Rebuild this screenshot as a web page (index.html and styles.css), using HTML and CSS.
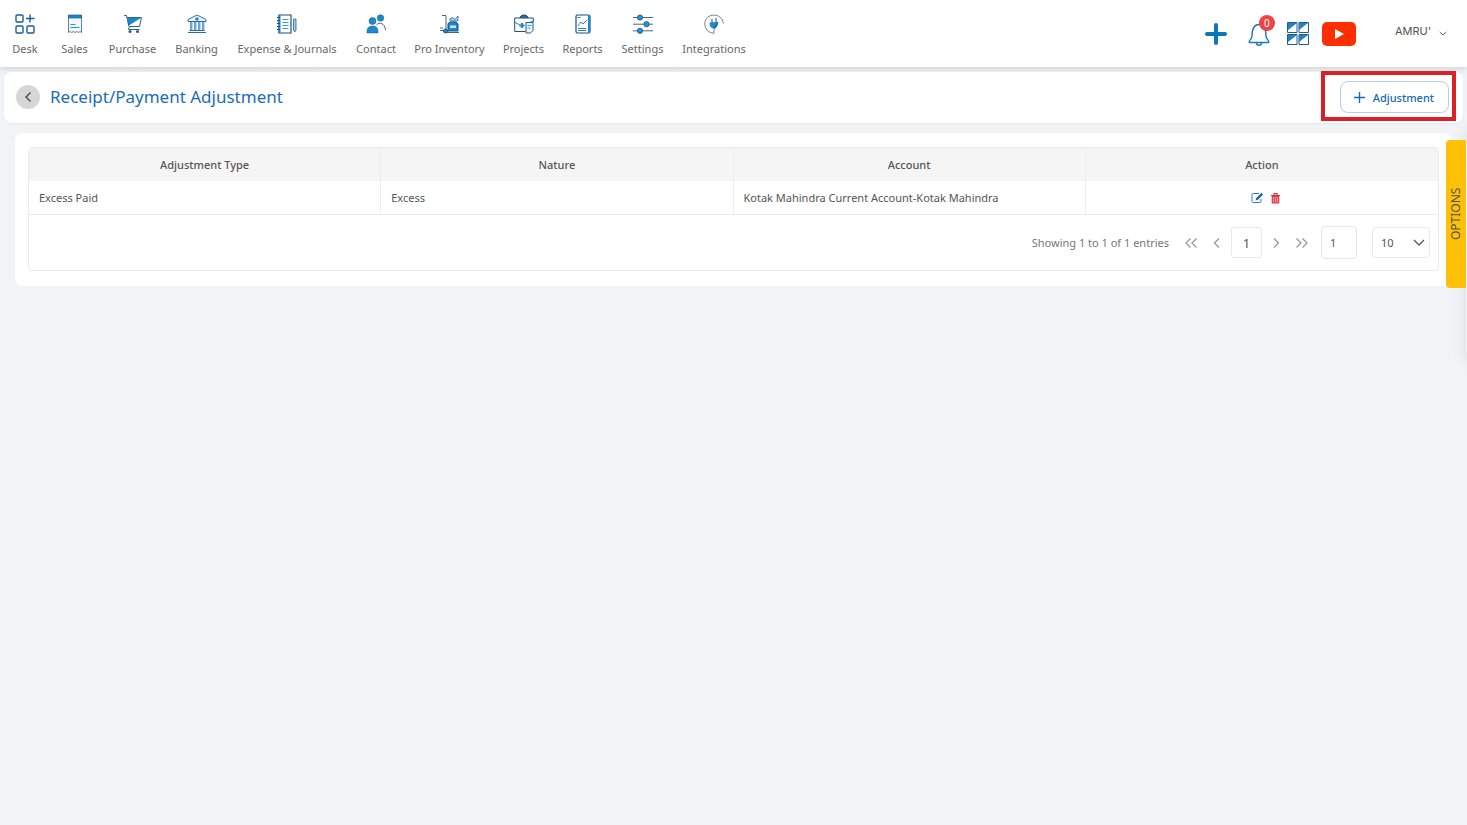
FILE: index.html
```html
<!DOCTYPE html>
<html lang="en">
<head>
<meta charset="utf-8">
<title>Receipt/Payment Adjustment</title>
<link rel="stylesheet" href="styles.css">
</head>
<body>
<header class="topbar">
  <nav class="menu">
    <a class="menu-item" href="#"><svg class="menu-icon" viewBox="0 0 20 20"><g fill="none" stroke="#1b5c9e" stroke-width="1.4"><rect x="1" y="1" width="7" height="7" rx="1"/><rect x="1" y="12" width="7" height="7" rx="1"/><rect x="12" y="12" width="7" height="7" rx="1"/><path d="M15 0.500v8M11 4.500h8.500"/></g></svg>Desk</a>
    <a class="menu-item" href="#"><svg class="menu-icon" viewBox="0 0 20 20"><path d="M3.500 1.500h13v17l-1.500-1-1.600 1-1.700-1-1.700 1-1.700-1-1.700 1-1.600-1-1.500 1z" fill="#f3f9fe" stroke="#5681ad"/><path d="M3.500 1h13v3h-13z" fill="#1e88c9" stroke="#1b5c9e" stroke-width=".7"/><path d="M5.500 10.500h5M5.500 13.500h9" stroke="#2e93d1"/></svg>Sales</a>
    <a class="menu-item" href="#"><svg class="menu-icon" viewBox="0 0 20 20"><path d="M4.500 4h13.500l-13 8z" fill="#1e88c9"/><path d="M1 1.500h2.500l2.500 11M4 3.500h14.500l-2 9h-10l-1 3h11" fill="none" stroke="#33618f"/><circle cx="7" cy="17.500" r="1.500" fill="#1b5c9e"/><circle cx="14.500" cy="17.500" r="1.500" fill="#1b5c9e"/></svg>Purchase</a>
    <a class="menu-item" href="#"><svg class="menu-icon" viewBox="0 0 20 20"><path d="M1 7.500v-2L10 1l9 4.500v2z" fill="#eef7fd" stroke="#286da8"/><circle cx="10" cy="5" r="1.800" fill="#1e88c9"/><path d="M4 8v8M8 8v8M12 8v8M16 8v8" stroke="#1b5c9e" stroke-width="1.200"/><path d="M5 8v8M9 8v8M13 8v8M17 8v8" stroke="#6cb4df"/><path d="M2.500 16.500h15M1 18.500h18" stroke="#286da8"/></svg>Banking</a>
    <a class="menu-item" href="#"><svg class="menu-icon" viewBox="0 0 20 20"><path d="M2 1h12v18H2z" fill="#fff" stroke="#1b4f86" stroke-width="1.200"/><path d="M2.500 1v18" stroke="#1e88c9" stroke-width="2"/><path d="M0 3.500h3M0 6.500h3M0 9.500h3M0 12.500h3M0 15.500h3" stroke="#1b4f86"/><path d="M5.500 5.500h6M5.500 8.500h6M5.500 11.500h6M5.500 14.500h6" stroke="#3a9bd4"/><path d="M16.500 5h2.500v11l-1.200 2-1.300-2z" fill="#9dcced" stroke="#2865a0" stroke-width=".8"/></svg>Expense &amp; Journals</a>
    <a class="menu-item" href="#"><svg class="menu-icon" viewBox="0 0 20 20"><g fill="#1e88c9" stroke="#1b5c9e" stroke-width=".5"><circle cx="6.500" cy="7" r="3.500"/><circle cx="14.500" cy="4" r="3.300"/><path d="M1 19v-2c0-3 2-5 5.500-5s5.500 2 5.500 5v2z"/></g><path d="M10.500 11c3-3.500 8.500-1.500 9 5" fill="none" stroke="#4b6381"/></svg>Contact</a>
    <a class="menu-item" href="#"><svg class="menu-icon" viewBox="0 0 20 20"><path d="M2 1.500h4v14M0 14h3M0 16.500h5M7 18.500h12" fill="none" stroke="#4a6486"/><path d="M8 9.500l2-1.500h6l2 2v7H8z" fill="#1e88c9" stroke="#1b4f86"/><path d="M10 11.500h6v2.500h-6z" fill="#cce8f7"/><circle cx="5.500" cy="17" r="2" fill="#2f83bd" stroke="#1b4f86"/><path d="M10 7V4.500l3-1 1.500 2L18 2v5z" fill="#a9cfe8" stroke="#28598b" stroke-width=".7"/></svg>Pro Inventory</a>
    <a class="menu-item" href="#"><svg class="menu-icon" viewBox="0 0 20 20"><path d="M6 4c0-4 8-4 8 0" fill="#286da8" stroke="#173e6c"/><path d="M.7 4h18.600v4M.7 4v13.500h11" fill="none" stroke="#284c77"/><path d="M1 8.500l5 2.500M12 10.500l7-3.500" stroke="#1e88c9"/><path d="M5.500 11.500h5M8 9v5" stroke="#1e88c9" stroke-width="2"/><path d="M12 8.500h7v8l-2.500 2.500H12z" fill="#eef8ff" stroke="#1b5c9e"/><path d="M13.500 11.500h4M13.500 14h3" stroke="#3a9bd4"/></svg>Projects</a>
    <a class="menu-item" href="#"><svg class="menu-icon" viewBox="0 0 20 20"><rect x="3" y="1" width="14" height="18" rx="1.500" fill="#fff" stroke="#1b4f86" stroke-width="1.200"/><path d="M15 1.500l2 1v16h-2z" fill="#1e88c9"/><path d="M5 12l3-4 2 2 4-4M4.500 3.500h3M5 14.500h8M5 16.500h8" fill="none" stroke="#2885c0"/></svg>Reports</a>
    <a class="menu-item" href="#"><svg class="menu-icon" viewBox="0 0 20 20"><path d="M0 3.500h20M0 10.200h20M0 16.800h20" stroke="#4a6486"/><g fill="#2794d1" stroke="#1b4f86" stroke-width=".8"><circle cx="7" cy="3.500" r="2.600"/><circle cx="13.500" cy="10.200" r="2.600"/><circle cx="7" cy="16.800" r="2.600"/></g></svg>Settings</a>
    <a class="menu-item" href="#"><svg class="menu-icon" viewBox="0 0 20 20"><path d="M19.300 9.500C18.500-1.500 1-2 .8 9.800c0 5 4 9.500 9.200 9.400v-4" fill="none" stroke="#687e9c"/><path d="M5.500 8.500L14 8c0 4-1 5.500-4 6.500-3 0-4.500-2-4.500-6z" fill="#1e88c9"/><path d="M8 5v4M12 4v5M14 8.500l-4 6.500" stroke="#1b4f86"/></svg>Integrations</a>
  </nav>
  <div class="tools">
    <button class="tool" aria-label="Add"><svg width="22" height="22" viewBox="0 0 22 22"><path d="M11 2v18M2 11h18" stroke="#0877b9" stroke-width="4" stroke-linecap="round"/></svg></button>
    <button class="tool bell" aria-label="Notifications"><svg width="24" height="24" viewBox="0 0 24 24" fill="none" stroke="#1878b8" stroke-width="1.400"><path d="M2.500 20.500h19c1.500-1.500-2-3-2.500-6C19 6 17 2.500 12 2.500S5 6 5 14.500c-.5 3-4 4.500-2.500 6z"/><path d="M9.500 21c0 3 5 3 5 0"/></svg><span class="badge">0</span></button>
    <button class="tool" aria-label="Apps"><svg width="22" height="23" viewBox="0 0 22 23"><g fill="#fff" stroke="#235b91"><path d="M.5.500h9.500v10H.5zM12 .500h9.500v10H12zM.5 12.500h9.500v10H.5zM12 12.500h9.500v10H12z"/></g><path d="M1 1h9L1 8zM12 1h9l-9 7zM1 13h9l-9 7zM12 13h9l-9 7z" fill="#1f83c1"/></svg></button>
    <button class="tool" aria-label="Video guides"><svg width="34" height="24" viewBox="0 0 34 24"><rect width="34" height="24" rx="5" fill="#ff2e00"/><path d="M13 7v10l9-5z" fill="#fff"/></svg></button>
  </div>
  <button class="account">AMRU'<svg width="8" height="5" viewBox="0 0 8 5"><path d="M.7 1L4 4l3.300-3" fill="none" stroke="#666"/></svg></button>
</header>
<main class="page">
  <section class="titlebar">
    <button class="back" aria-label="Back"><svg width="8" height="10" viewBox="0 0 8 10"><path d="M6.500.500L2 5l4.500 4.500" fill="none" stroke="#444" stroke-width="1.300"/></svg></button>
    <h1 class="title">Receipt/Payment Adjustment</h1>
    <div class="callout"><button class="add"><svg width="11" height="11" viewBox="0 0 11 11"><path d="M5.500 0v11M0 5.500h11" stroke="#1769b0" stroke-width="1.400"/></svg>Adjustment</button></div>
  </section>
  <section class="card">
    <div class="grid">
      <table class="entries">
        <thead><tr><th>Adjustment Type</th><th>Nature</th><th>Account</th><th>Action</th></tr></thead>
        <tbody><tr><td>Excess Paid</td><td>Excess</td><td>Kotak Mahindra Current Account-Kotak Mahindra</td>
        <td><div class="actions"><button class="action" aria-label="Edit"><svg width="13" height="12" viewBox="0 0 13 12"><path d="M8 1.500H2.200Q1 1.500 1 2.700v6.600q0 1.200 1.200 1.200h6.600q1.200 0 1.200-1.200V7" fill="none" stroke="#337ebd"/><path d="M4.500 8.500l.7-2.500L10.500.800l1.700 1.700L7 7.800z" fill="#1769b0"/></svg></button><button class="action" aria-label="Delete"><svg width="9" height="11" viewBox="0 0 9 11"><path d="M0 2.500h9M3 2V.700h3V2" fill="none" stroke="#d93848" stroke-width="1.200"/><path d="M1.300 3.500h6.400v6.300H1.300z" fill="#f0959d" stroke="#d93848" stroke-width="1.200"/><path d="M3.500 4v5M5.500 4v5" stroke="#d93848" stroke-width=".8"/></svg></button></div></td></tr></tbody>
      </table>
      <div class="pager">
        <span class="summary">Showing 1 to 1 of 1 entries</span>
        <div class="steps">
          <button class="step" aria-label="First page"><svg width="13" height="10" viewBox="0 0 13 10"><path d="M5.500.500L1 5l4.500 4.500M11.500.500L7 5l4.500 4.500"/></svg></button>
          <button class="step" aria-label="Previous page"><svg width="13" height="10" viewBox="0 0 13 10"><path d="M9 .500L4.500 5 9 9.500"/></svg></button>
        </div>
        <button class="current">1</button>
        <div class="steps">
          <button class="step" aria-label="Next page"><svg width="13" height="10" viewBox="0 0 13 10"><path d="M4 .500L8.500 5 4 9.500"/></svg></button>
          <button class="step" aria-label="Last page"><svg width="13" height="10" viewBox="0 0 13 10"><path d="M1.500.500L6 5l-4.500 4.500M7.500.500L12 5l-4.500 4.500"/></svg></button>
        </div>
        <input class="jump" type="text" value="1" aria-label="Go to page">
        <span class="size"><select class="size-select" aria-label="Rows per page"><option>10</option><option>25</option></select><svg class="size-arrow" width="12" height="8" viewBox="0 0 12 8"><path d="M1 1l5 5 5-5" fill="none" stroke="#555" stroke-width="1.300"/></svg></span>
      </div>
    </div>
  </section>
</main>
<aside class="drawer"><button class="options">OPTIONS</button></aside>
</body>
</html>
```
FILE: styles.css
```css
* { box-sizing: border-box; }
body {
  margin: 0;
  min-height: 100vh;
  position: relative;
  overflow-x: hidden;
  background: #f0f4f7;
  color: #555;
  font-family: "Noto Sans", sans-serif;
  font-size: 11px;
}
button, input, select {
  font: inherit;
  color: inherit;
  margin: 0;
  padding: 0;
  border: 0;
  background: none;
}
svg { display: block; }
.topbar {
  display: flex;
  align-items: center;
  height: 67px;
  background: #fff;
  box-shadow: 0 2px 6px rgba(0, 0, 0, .13);
}
.menu {
  display: grid;
  grid-template-columns: 50px 49px 67px 61px 120px 58px 89px 59px 59px 61px 82px;
  padding-top: 4px;
}
.menu-item {
  display: flex;
  flex-direction: column;
  align-items: center;
  gap: 7px;
  color: #666;
  line-height: 16px;
  white-space: nowrap;
  text-decoration: none;
}
.menu-icon { width: 20px; height: 20px; }
.tools {
  display: flex;
  align-items: center;
  gap: 16px;
  margin-left: auto;
}
.tool:first-child { margin-right: 4px; }
.bell { position: relative; }
.badge {
  position: absolute;
  top: -7px;
  right: -4px;
  width: 16px;
  height: 16px;
  border-radius: 8px;
  background: #ee4444;
  color: #fff;
  font-size: 10px;
  line-height: 16px;
}
.tool:last-child { margin-left: -3px; }
.account {
  display: flex;
  align-items: center;
  margin: 0 20px 5px 39px;
  font-family: Inter, sans-serif;
}
.account svg { margin: 5px 0 0 8px; }
.page { padding: 5px 4px 0; }
.titlebar {
  display: flex;
  align-items: center;
  height: 51px;
  padding: 0 7px 1px 12px;
  border-radius: 8px;
  background: #fff;
  box-shadow: 0 1px 3px rgba(0, 0, 0, .05);
}
.back {
  display: grid;
  place-items: center;
  width: 24px;
  height: 24px;
  border-radius: 12px;
  background: #d6d6d6;
}
.title {
  margin: 0 0 0 10px;
  color: #1b6cb8;
  font-size: 17px;
  line-height: 24px;
  font-weight: 400;
}
.callout {
  align-self: flex-start;
  margin: -1px 0 0 auto;
  padding: 6px 3px 4px 15px;
  border: 4px solid #dc2028;
}
.add {
  display: flex;
  align-items: center;
  gap: 8px;
  height: 32px;
  padding: 0 14px 0 13px;
  border: 1px solid #b5d0e5;
  border-radius: 8px;
  color: #1769b0;
  font-weight: 500;
}
.card {
  margin: 10px 11px 0;
  padding: 14px 13px 15px;
  border-radius: 8px;
  background: #fff;
}
.grid {
  border: 1px solid #ebebeb;
  border-radius: 4px;
  overflow: hidden;
}
.entries {
  width: 100%;
  table-layout: fixed;
  border-collapse: separate;
  border-spacing: 0;
}
.entries th, .entries td {
  height: 33px;
  padding: 1px 10px 0;
  line-height: 16px;
  border-right: 1px solid #ededed;
}
.entries th { background: #f5f5f5; font-weight: 500; }
.entries td { height: 34px; border-bottom: 1px solid #ebebeb; }
.entries th:last-child, .entries td:last-child { border-right: 0; }
.actions {
  display: flex;
  justify-content: center;
  align-items: center;
  gap: 7px;
  padding-left: 8px;
}
.pager {
  display: flex;
  align-items: center;
  justify-content: flex-end;
  height: 55px;
  padding-right: 8px;
}
.summary { margin-right: 16px; color: #777; }
.steps { display: flex; gap: 12px; }
.step svg { fill: none; stroke: #999; stroke-width: 1.300; }
.current {
  width: 31px;
  height: 31px;
  margin: 0 8px;
  border: 1px solid #e9e9e9;
  border-radius: 3px;
  font-size: 13px;
}
.jump {
  width: 36px;
  height: 33px;
  margin: 0 15px 0 13px;
  padding-left: 8px;
  border: 1px solid #e5e5e5;
  border-radius: 4px;
}
.size { position: relative; }
.size-select {
  appearance: none;
  width: 58px;
  height: 31px;
  padding-left: 8px;
  border: 1px solid #e9e9e9;
  border-radius: 4px;
}
.size-arrow { position: absolute; top: 12px; right: 5px; pointer-events: none; }
.drawer {
  position: absolute;
  top: 140px;
  right: 0;
  width: 1px;
  height: 212px;
  box-shadow: 8px 0 16px 8px rgba(0, 0, 0, .1);
}
.options {
  position: absolute;
  top: 0;
  right: 100%;
  width: 20px;
  height: 148px;
  border-radius: 0 4px 4px 0;
  background: #ffc107;
  font-size: 12px;
  line-height: 20px;
  writing-mode: vertical-rl;
  transform: rotate(180deg);
}
```
